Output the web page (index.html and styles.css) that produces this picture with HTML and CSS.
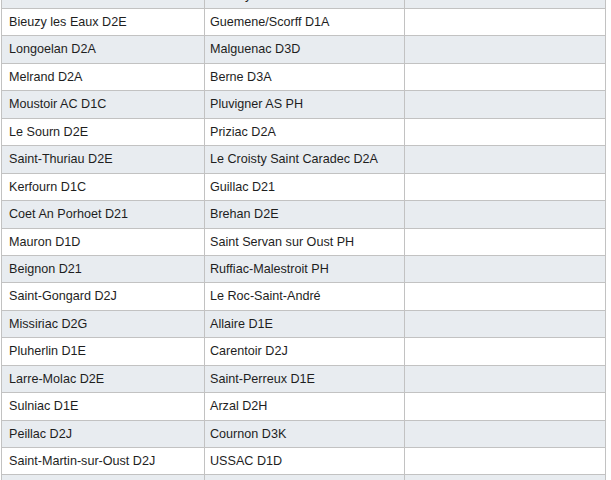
FILE: index.html
```html
<!DOCTYPE html>
<html>
<head>
<meta charset="utf-8">
<link rel="stylesheet" href="styles.css">
</head>
<body>
<div class="viewport">
<table class="grid">
<colgroup><col class="c1"><col class="c2"><col class="c3"></colgroup>
<tbody>
<tr class="alt"><td>Naizin D1E</td><td>Pontivy D1B</td><td></td></tr>
<tr><td>Bieuzy les Eaux D2E</td><td>Guemene/Scorff D1A</td><td></td></tr>
<tr class="alt"><td>Longoelan D2A</td><td>Malguenac D3D</td><td></td></tr>
<tr><td>Melrand D2A</td><td>Berne D3A</td><td></td></tr>
<tr class="alt"><td>Moustoir AC D1C</td><td>Pluvigner AS PH</td><td></td></tr>
<tr><td>Le Sourn D2E</td><td>Priziac D2A</td><td></td></tr>
<tr class="alt"><td>Saint-Thuriau D2E</td><td>Le Croisty Saint Caradec D2A</td><td></td></tr>
<tr><td>Kerfourn D1C</td><td>Guillac D21</td><td></td></tr>
<tr class="alt"><td>Coet An Porhoet D21</td><td>Brehan D2E</td><td></td></tr>
<tr><td>Mauron D1D</td><td>Saint Servan sur Oust PH</td><td></td></tr>
<tr class="alt"><td>Beignon D21</td><td>Ruffiac-Malestroit PH</td><td></td></tr>
<tr><td>Saint-Gongard D2J</td><td>Le Roc-Saint-André</td><td></td></tr>
<tr class="alt"><td>Missiriac D2G</td><td>Allaire D1E</td><td></td></tr>
<tr><td>Pluherlin D1E</td><td>Carentoir D2J</td><td></td></tr>
<tr class="alt"><td>Larre-Molac D2E</td><td>Saint-Perreux D1E</td><td></td></tr>
<tr><td>Sulniac D1E</td><td>Arzal D2H</td><td></td></tr>
<tr class="alt"><td>Peillac D2J</td><td>Cournon D3K</td><td></td></tr>
<tr><td>Saint-Martin-sur-Oust D2J</td><td>USSAC D1D</td><td></td></tr>
<tr class="alt"><td>Ploërmel D1A</td><td>Rieux D2B</td><td></td></tr>
</tbody>
</table>
</div>
</body>
</html>
```
FILE: styles.css
```css
html, body {
  margin: 0;
  padding: 0;
  background: #ffffff;
}
.viewport {
  width: 611px;
  height: 480px;
  overflow: hidden;
}
.grid {
  border-collapse: collapse;
  table-layout: fixed;
  width: 604px;
  margin: -19.43px 0 0 1px;
  font-family: "Liberation Sans", Arial, Helvetica, sans-serif;
  font-size: 12.6px;
  color: #1e1e1e;
}
.c1 { width: 203px; }
.c2 { width: 200px; }
.c3 { width: 201px; }
.grid td {
  border: 1px solid #c2c2c2;
  padding: 0 5px;
  height: 26.43px;
  line-height: 26.43px;
  white-space: nowrap;
  overflow: hidden;
  vertical-align: middle;
}
.grid td:first-child {
  padding-left: 7px;
}
.grid tr.alt td {
  background: #e8ecf0;
}
```
